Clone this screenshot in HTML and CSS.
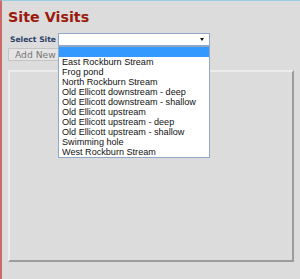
FILE: index.html
```html
<!DOCTYPE html>
<html>
<head>
<meta charset="utf-8">
<link rel="stylesheet" href="styles.css">
</head>
<body>
<div class="page">
  <h1 class="title">Site Visits</h1>
  <div class="site-row">
    <label class="site-label">Select Site</label>
    <div class="select">
      <span class="arrow"></span>
      <ul class="options">
        <li class="opt selected">&nbsp;</li>
        <li class="opt">East Rockburn Stream</li>
        <li class="opt">Frog pond</li>
        <li class="opt">North Rockburn Stream</li>
        <li class="opt">Old Ellicott downstream - deep</li>
        <li class="opt">Old Ellicott downstream - shallow</li>
        <li class="opt">Old Ellicott upstream</li>
        <li class="opt">Old Ellicott upstream - deep</li>
        <li class="opt">Old Ellicott upstream - shallow</li>
        <li class="opt">Swimming hole</li>
        <li class="opt">West Rockburn Stream</li>
      </ul>
    </div>
  </div>
  <button class="add-btn">Add New Visit</button>
  <div class="panel"></div>
</div>
</body>
</html>
```

FILE: styles.css
```css
html, body {
  margin: 0;
  padding: 0;
  background: #dcdcdc;
}
.page {
  box-sizing: border-box;
  width: 300px;
  height: 279px;
  border-left: 2px solid #cc6a6a;
  border-top: 1px solid #9ccbe4;
  padding: 0 0 0 6px;
  background: #dcdcdc;
  font-family: "DejaVu Sans", Verdana, sans-serif;
}
.title {
  margin: 7px 0 0 0;
  font-size: 14.3px;
  line-height: 18px;
  font-weight: bold;
  color: #9b1a0c;
}
.site-row {
  display: flex;
  align-items: center;
  margin-top: 7px;
  height: 13px;
}
.site-label {
  flex: 0 0 50px;
  min-width: 0;
  width: 50px;
  white-space: nowrap;
  font-size: 7.6px;
  font-weight: bold;
  color: #2c4068;
  padding-left: 2px;
  box-sizing: border-box;
}
.select {
  position: relative;
  flex: 0 0 152px;
  box-sizing: border-box;
  width: 152px;
  height: 13px;
  background: #fff;
  border: 1px solid #8fa8c8;
}
.arrow {
  position: absolute;
  right: 5px;
  top: 4px;
  width: 0;
  height: 0;
  border-left: 2.5px solid transparent;
  border-right: 2.5px solid transparent;
  border-top: 3px solid #111;
}
.options {
  position: absolute;
  left: -1px;
  top: 12px;
  box-sizing: border-box;
  width: 152px;
  height: 112px;
  margin: 0;
  padding: 0;
  list-style: none;
  background: #fff;
  border: 1px solid #8fa8c8;
  z-index: 2;
}
.opt {
  height: 10px;
  line-height: 10px;
  padding-left: 3px;
  font-family: "Liberation Sans", Arial, sans-serif;
  font-size: 9.1px;
  color: #111;
  white-space: nowrap;
}
.opt.selected {
  background: #3399ff;
}
.add-btn {
  display: block;
  box-sizing: border-box;
  margin: 2px 0 0 0;
  height: 13px;
  width: 90px;
  padding: 0 0 0 6px;
  text-align: left;
  white-space: nowrap;
  font-family: "DejaVu Sans", Verdana, sans-serif;
  font-size: 9.2px;
  line-height: 11px;
  color: #777;
  background: #e4e4e4;
  border: 1px solid #c4c4c4;
  border-radius: 1px;
}
.panel {
  box-sizing: border-box;
  margin-top: 9px;
  width: 286px;
  height: 192px;
  border-top: 2px solid #ececec;
  border-left: 2px solid #ececec;
  border-right: 2px solid #9c9c9c;
  border-bottom: 2px solid #9c9c9c;
  background: #dcdcdc;
}
```
